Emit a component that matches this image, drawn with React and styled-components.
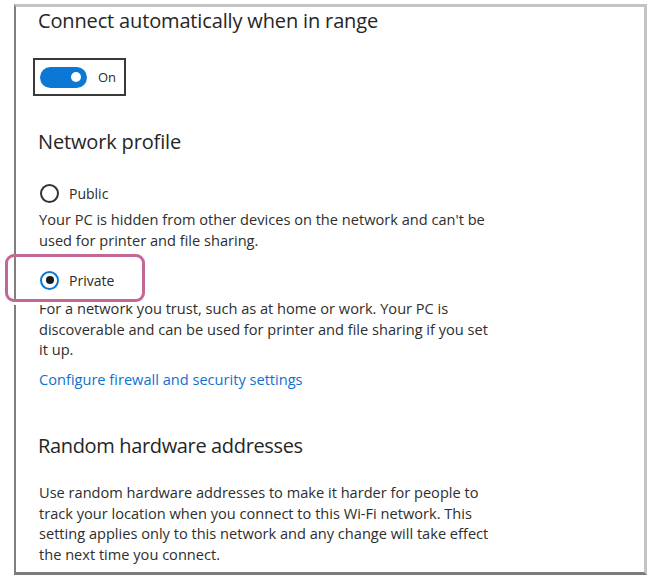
import React from "react";
import styled, { createGlobalStyle } from "styled-components";

const Global = createGlobalStyle`
  html, body { margin: 0; padding: 0; background: #ffffff; }
  body { font-family: "Open Sans", "Noto Sans", sans-serif; color: #2b2b2b; }
`;

const Page = styled.div`
  position: relative;
  width: 650px;
  height: 579px;
  padding: 4px 0 0 14px;
  box-sizing: border-box;
`;

const Frame = styled.div`
  width: 633px;
  height: 571px;
  box-sizing: border-box;
  border-top: 3px solid #c3c3c3;
  border-right: 3px solid #c3c3c3;
  border-bottom: 3px solid #7c7c7c;
  border-left: 2px solid #808080;
  padding-left: 23px;
  display: flex;
  flex-direction: column;
  align-items: flex-start;
`;

const Heading = styled.div`
  font-size: 20px;
  line-height: 28px;
  letter-spacing: ${(p) => p.$ls ?? -0.15}px;
  color: #262626;
  margin-top: ${(p) => p.$mt || 0}px;
  margin-left: -1px;
`;

const ToggleFrame = styled.div`
  margin-top: 23px;
  margin-left: -6px;
  width: 93px;
  height: 38px;
  box-sizing: border-box;
  border: 2px solid #3a3a3a;
  display: flex;
  align-items: center;
  padding-left: 5px;
  gap: 11px;
`;

const Pill = styled.div`
  width: 47px;
  height: 21px;
  border-radius: 11px;
  background: #0a78d4;
  display: flex;
  align-items: center;
  justify-content: flex-end;
  padding-right: 6px;
  box-sizing: border-box;
`;

const Knob = styled.div`
  width: 10px;
  height: 10px;
  border-radius: 50%;
  background: #ffffff;
`;

const ToggleLabel = styled.span`
  font-size: 13px;
  line-height: 16px;
  color: #2b2b2b;
`;

const RadioRow = styled.div`
  margin-top: ${(p) => p.$mt}px;
  margin-left: 1px;
  height: 20px;
  display: flex;
  align-items: center;
  gap: 10px;
  font-size: 14px;
  color: #2b2b2b;
`;

const RadioCircle = styled.div`
  width: 19px;
  height: 19px;
  box-sizing: border-box;
  border-radius: 50%;
  border: 2px solid ${(p) => (p.$checked ? "#0a78d4" : "#333333")};
  display: flex;
  align-items: center;
  justify-content: center;
`;

const RadioDot = styled.div`
  width: 8px;
  height: 8px;
  border-radius: 50%;
  background: #1a1a1a;
`;

const Desc = styled.p`
  margin: ${(p) => p.$mt}px 0 0 0;
  font-size: 14.6px;
  line-height: 20.5px;
  color: #2e2e2e;
`;

const Link = styled.a`
  margin-top: 9.5px;
  font-size: 14.6px;
  line-height: 20.5px;
  color: #1170cf;
  text-decoration: none;
`;

const Highlight = styled.div`
  position: absolute;
  left: 5px;
  top: 254px;
  width: 140px;
  height: 48px;
  box-sizing: border-box;
  border: 3px solid #c46795;
  border-radius: 9px;
  box-shadow: 0 3px 0 0 #ffffff;
`;

export default function App() {
  return (
    <>
      <Global />
      <Page>
        <Frame>
          <Heading>Connect automatically when in range</Heading>
          <ToggleFrame>
            <Pill>
              <Knob />
            </Pill>
            <ToggleLabel>On</ToggleLabel>
          </ToggleFrame>
          <Heading $mt={32}>Network profile</Heading>
          <RadioRow $mt={27}>
            <RadioCircle />
            <span>Public</span>
          </RadioRow>
          <Desc $mt={6}>
            Your PC is hidden from other devices on the network and can't be
            <br />
            used for printer and file sharing.
          </Desc>
          <RadioRow $mt={20}>
            <RadioCircle $checked>
              <RadioDot />
            </RadioCircle>
            <span>Private</span>
          </RadioRow>
          <Desc $mt={8}>
            For a network you trust, such as at home or work. Your PC is
            <br />
            discoverable and can be used for printer and file sharing if you set
            <br />
            it up.
          </Desc>
          <Link href="#">Configure firewall and security settings</Link>
          <Heading $mt={42.5} $ls={-0.35}>
            Random hardware addresses
          </Heading>
          <Desc $mt={22}>
            Use random hardware addresses to make it harder for people to
            <br />
            track your location when you connect to this Wi-Fi network. This
            <br />
            setting applies only to this network and any change will take effect
            <br />
            the next time you connect.
          </Desc>
        </Frame>
        <Highlight />
      </Page>
    </>
  );
}
